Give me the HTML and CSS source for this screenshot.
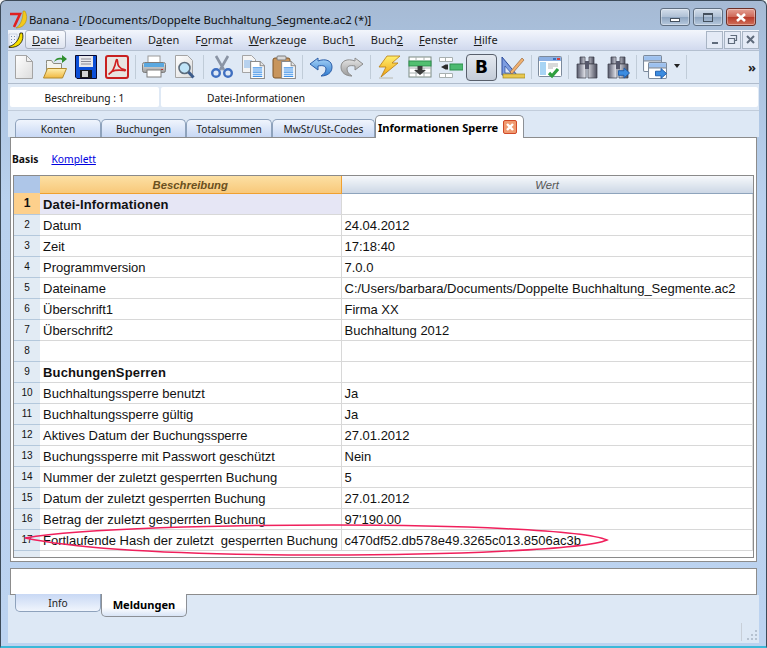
FILE: index.html
```html
<!DOCTYPE html>
<html lang="en">
<head>
    <meta charset="UTF-8">
    <meta name="viewport" content="width=device-width, initial-scale=1.0">
    <title>Banana - Doppelte Buchhaltung</title>
    <link rel="stylesheet" href="styles.css">
</head>
<body>
    <svg class="svg-defs" aria-hidden="true">
        <defs>
            <linearGradient id="gPage" x1="0" y1="0" x2="1" y2="1"><stop offset="0" stop-color="#ffffff"/><stop offset="1" stop-color="#dcdcdc"/></linearGradient>
            <linearGradient id="gFolder" x1="0" y1="0" x2="0" y2="1"><stop offset="0" stop-color="#fff0b0"/><stop offset="1" stop-color="#f0b840"/></linearGradient>
            <linearGradient id="gBlue" x1="0" y1="0" x2="0" y2="1"><stop offset="0" stop-color="#a8d4f8"/><stop offset="1" stop-color="#2f7cd0"/></linearGradient>
            <linearGradient id="gGrey" x1="0" y1="0" x2="0" y2="1"><stop offset="0" stop-color="#e8e8e8"/><stop offset="1" stop-color="#9a9a9a"/></linearGradient>
            <linearGradient id="gBino" x1="0" y1="0" x2="1" y2="0"><stop offset="0" stop-color="#55586a"/><stop offset="0.45" stop-color="#f0f2f8"/><stop offset="1" stop-color="#4a4c5c"/></linearGradient>
            <linearGradient id="gBolt" x1="0" y1="0" x2="0" y2="1"><stop offset="0" stop-color="#fff070"/><stop offset="1" stop-color="#f0a010"/></linearGradient>
            <symbol id="docLines" viewBox="0 0 14 17">
                <path d="M.5.5h9l4 4v12H.5z" fill="#fff" stroke="#8a8a8a"/>
                <path d="M9.500.5v4h4" fill="#e4e4e4" stroke="#8a8a8a"/>
                <path d="M2.500 6.500h9M2.500 8.500h9M2.500 10.500h9M2.500 12.500h9M2.500 14.500h9" stroke="#3c90e8"/>
            </symbol>
            <symbol id="binoculars" viewBox="0 0 24 24">
                <path d="M5 2h5v7H5zM14 2h5v7h-5z" fill="url(#gBino)" stroke="#3a3c48" stroke-width=".7"/>
                <path d="M2 9h9v14H2zM13 9h9v14h-9z" fill="url(#gBino)" stroke="#3a3c48" stroke-width=".7"/>
                <path d="M10 6h4v8h-4z" fill="#55586a"/>
            </symbol>
            <symbol id="blueArrow" viewBox="0 0 13 12">
                <path d="M.5 3.500h6V.5l6 5.500-6 5.500v-3h-6z" fill="#3c8ce0" stroke="#1c5aa8"/>
            </symbol>
            <symbol id="sheet" viewBox="0 0 18 16">
                <rect x=".5" y=".5" width="17" height="15" rx="1" fill="#fff" stroke="#7c8a9c"/>
                <rect x="1" y="1" width="16" height="4" fill="#9cc0ee"/>
                <path d="M.5 5.500h17" stroke="#7c8a9c"/>
            </symbol>
        </defs>
    </svg>

    <div class="window">
        <header class="title-bar">
            <svg class="app-logo" viewBox="0 0 20 20">
                <path d="M8 18C13 15 15 8 15 1h2c4 7 1 17-9 17z" fill="#f2c81c" stroke="#a88410" stroke-width=".5"/>
                <path d="M2 4h10L6 17" fill="none" stroke="#e02020" stroke-width="2.600"/>
            </svg>
            <span class="app-title">Banana - [/Documents/Doppelte Buchhaltung_Segmente.ac2 (*)]</span>
            <div class="win-buttons">
                <button class="win-btn"><span class="glyph-min"></span></button>
                <button class="win-btn"><span class="glyph-max"></span></button>
                <button class="win-btn win-close">
                    <svg viewBox="0 0 12 9" class="close-glyph"><path d="M2 1l8 7M10 1L2 8" stroke="#fff" stroke-width="2.600"/></svg>
                </button>
            </div>
        </header>

        <nav class="menu-bar">
            <svg class="menu-logo" viewBox="0 0 16 16">
                <path d="M1 2h8v12H1z" fill="#eef2fa" stroke="#aab4cc" stroke-width=".5"/>
                <path d="M3 4h1v1H3zM6 4h1v1H6zM3 7h1v1H3zM6 7h1v1H6zM3 10h1v1H3z" fill="#7c8cb0"/>
                <path d="M1 14.500C7 13 11 8 12 1h2.500c2 8-3 15-13.500 14.500z" fill="#f8e000" stroke="#111" stroke-width=".8"/>
            </svg>
            <a class="menu-item menu-current"><u>D</u>atei</a>
            <a class="menu-item"><u>B</u>earbeiten</a>
            <a class="menu-item">D<u>a</u>ten</a>
            <a class="menu-item">F<u>o</u>rmat</a>
            <a class="menu-item"><u>W</u>erkzeuge</a>
            <a class="menu-item">Buch<u>1</u></a>
            <a class="menu-item">Buch<u>2</u></a>
            <a class="menu-item"><u>F</u>enster</a>
            <a class="menu-item"><u>H</u>ilfe</a>
            <div class="doc-buttons">
                <span class="doc-btn"><i class="doc-min"></i></span>
                <span class="doc-btn">
                    <svg viewBox="0 0 11 11" class="doc-glyph"><path d="M3.500 1.500h6v5h-2M1.500 4.500h6v5h-6z" fill="none" stroke="#5f6b7c" stroke-width="1.200"/></svg>
                </span>
                <span class="doc-btn">
                    <svg viewBox="0 0 11 11" class="doc-glyph"><path d="M2 2l7 7M9 2l-7 7" stroke="#5f6b7c" stroke-width="2"/></svg>
                </span>
            </div>
        </nav>

        <div class="toolbar">
            <span class="tool"><svg viewBox="0 0 24 24"><path d="M3.500 .5h11l6 6v17h-17z" fill="url(#gPage)" stroke="#a4a4a4"/><path d="M14.500 .5v6h6z" fill="#f0f0f0" stroke="#a4a4a4"/></svg></span>
            <span class="tool"><svg viewBox="0 0 24 24">
                <path d="M3.500 8.500v14h15V8.500h-8l-2-3h-5z" fill="#f4f4ee" stroke="#8c8c80"/>
                <path d="M4.500 13.500h19l-4 9.500H.5z" fill="url(#gFolder)" stroke="#b08a30"/>
                <path d="M11 7c1-4 5-5 8-4V0l5 4-5 4V5c-3-1-6 0-8 2z" fill="#2f8f2f"/>
            </svg></span>
            <span class="tool"><svg viewBox="0 0 24 24">
                <path d="M1.500 .5h21v23H3l-1.500-1.500z" fill="#0b4fd8" stroke="#0a0a2c"/>
                <rect x="5" y="1" width="14" height="11" fill="#e8e8ec"/>
                <path d="M7 4h10M7 6.500h10M7 9h10" stroke="#8a8a96"/>
                <rect x="6" y="15" width="12" height="8" fill="#1a1a1a"/>
                <rect x="8" y="16" width="6" height="6" fill="#d4d4d4"/>
            </svg></span>
            <span class="tool"><svg viewBox="0 0 24 24">
                <rect x="1" y="1" width="22" height="22" rx="2" fill="#e8e4e0" stroke="#c82020" stroke-width="2"/>
                <path d="M4 19c3-1 6-7 7-13 .3-2 1.500-2 1.500 0 0 5 3 8 7 8.500 1.500.2 1 1.500-.5 1-4-.5-9-.5-12 1-2 1-3 3-3 2.500z" fill="none" stroke="#d02020" stroke-width="1.600"/>
            </svg></span>
            <i class="tool-sep"></i>
            <span class="tool"><svg viewBox="0 0 24 24">
                <rect x="6" y="1" width="12" height="8" fill="#fff" stroke="#9a9a9a"/>
                <rect x=".5" y="7.500" width="23" height="10" rx="2" fill="url(#gGrey)" stroke="#7c7c7c"/>
                <rect x="2" y="8" width="20" height="4" fill="#5aa8e0"/>
                <rect x="19" y="14" width="2" height="1" fill="#d02020"/>
                <rect x="5" y="15" width="14" height="7" fill="#fff" stroke="#7c7c7c"/>
            </svg></span>
            <span class="tool"><svg viewBox="0 0 24 24">
                <path d="M2.500 .5h12l5 5v17h-17z" fill="url(#gPage)" stroke="#a4a4a4"/>
                <circle cx="11.500" cy="13" r="5.500" fill="#bfe4f8" stroke="#5c6c7c" stroke-width="1.600"/>
                <path d="M15.500 17l5 5.500" stroke="#3c5c8c" stroke-width="3"/>
            </svg></span>
            <i class="tool-sep"></i>
            <span class="tool"><svg viewBox="0 0 24 24">
                <path d="M6 1l8 14M18 1l-8 14" stroke="#8a94a4" stroke-width="2.600"/>
                <circle cx="6" cy="18" r="3.800" fill="none" stroke="#3f6fc0" stroke-width="2.400"/>
                <circle cx="18" cy="18" r="3.800" fill="none" stroke="#3f6fc0" stroke-width="2.400"/>
            </svg></span>
            <span class="tool"><svg viewBox="0 0 24 24">
                <path d="M1.500 .5h9l4 4v13h-13z" fill="#f4f4f4" stroke="#a4a4a4"/>
                <path d="M3 6h8M3 8h8M3 10h8M3 12h8" stroke="#7cb0e8"/>
                <use href="#docLines" x="9" y="6" width="15" height="18"/>
            </svg></span>
            <span class="tool"><svg viewBox="0 0 24 24">
                <rect x="1" y="3" width="17" height="20" rx="2" fill="#c8955c" stroke="#7c5428"/>
                <rect x="5" y="1" width="9" height="4" rx="1" fill="#d8d8d8" stroke="#7c7c7c"/>
                <use href="#docLines" x="9" y="6" width="15" height="18"/>
            </svg></span>
            <i class="tool-sep"></i>
            <span class="tool"><svg viewBox="0 0 24 24">
                <path d="M9 3L1 9l8 6v-4c5-1 8 0 8 3 0 3-2 5-5 7 6 0 11-3 11-9 0-6-6-9-14-6z" fill="url(#gBlue)" stroke="#2c5ea8"/>
            </svg></span>
            <span class="tool"><svg viewBox="0 0 24 24">
                <path d="M15 3l8 6-8 6v-4c-5-1-8 0-8 3 0 3 2 5 5 7-6 0-11-3-11-9 0-6 6-9 14-6z" fill="url(#gGrey)" stroke="#8c8c8c"/>
            </svg></span>
            <i class="tool-sep"></i>
            <span class="tool"><svg viewBox="0 0 24 24">
                <path d="M10 1h13l-8 7h6L4 22l5-10H2z" fill="url(#gBolt)" stroke="#b87c10" stroke-width=".8"/>
                <path d="M2 23h14" stroke="#b8b8b0"/>
            </svg></span>
            <span class="tool"><svg viewBox="0 0 24 24">
                <rect x="1" y="2" width="22" height="20" fill="#fff" stroke="#7c8c84"/>
                <path d="M1 13h22M1 18h22M8 13v9M16 13v9M8 2v3M16 2v3" stroke="#a8b0b0"/>
                <rect x="1" y="6" width="22" height="5" fill="#52c070" stroke="#2f8f4f"/>
                <path d="M9.500 11h5v4H18l-6 5-6-5h3.500z" fill="#3c3c3c"/>
            </svg></span>
            <span class="tool"><svg viewBox="0 0 24 24">
                <path d="M.5 2.500h13v4H.5zM.5 18.500h13v4H.5zM6.500 2.500v4M6.500 18.500v4" fill="#fff" stroke="#a8b0b0"/>
                <rect x="11" y="9" width="13" height="6" fill="#4cba70" stroke="#2f8f4f"/>
                <path d="M9 9.500v5H6.500L2 12l4.500-2.500z" fill="#2c2c2c"/>
            </svg></span>
            <span class="tool tool-on"><b class="bold-glyph">B</b></span>
            <span class="tool"><svg viewBox="0 0 24 24">
                <path d="M1 2l15 18H1z" fill="#7c9ce0" stroke="#2c4c9c"/>
                <path d="M4 11l6 7H4z" fill="#dbe6f8" stroke="#2c4c9c" stroke-width=".7"/>
                <rect x="2" y="19" width="22" height="4" fill="#e8c850" stroke="#a08820" stroke-width=".7"/>
                <path d="M9 17L21 3l2 2L11 19z" fill="#f0b070" stroke="#8c5c30" stroke-width=".6"/>
            </svg></span>
            <i class="tool-sep"></i>
            <span class="tool"><svg viewBox="0 0 24 24">
                <rect x=".5" y="1.500" width="23" height="20" rx="1" fill="#fff" stroke="#7c8a9c"/>
                <rect x="1" y="2" width="22" height="4" fill="#8cb0e4"/>
                <rect x="15" y="3" width="3" height="2" fill="#3c70c0"/>
                <rect x="19" y="3" width="3" height="2" fill="#d04040"/>
                <rect x="2" y="7" width="6" height="13" fill="#a8d4f4"/>
                <path d="M10 9h10M10 11h10M10 13h5" stroke="#b4b4b4"/>
                <path d="M11 18l3 3 6-7" fill="none" stroke="#2f9f3f" stroke-width="3.200"/>
            </svg></span>
            <i class="tool-sep"></i>
            <span class="tool"><svg viewBox="0 0 24 24"><use href="#binoculars" width="24" height="24"/></svg></span>
            <span class="tool"><svg viewBox="0 0 24 24">
                <use href="#binoculars" width="24" height="24"/>
                <use href="#blueArrow" x="12" y="12" width="12" height="12"/>
            </svg></span>
            <i class="tool-sep"></i>
            <span class="tool"><svg viewBox="0 0 24 24">
                <use href="#sheet" x="0" y="0" width="19" height="17"/>
                <use href="#sheet" x="5" y="7" width="19" height="17"/>
                <use href="#blueArrow" x="12" y="13" width="12" height="11"/>
            </svg></span>
            <span class="tool-drop"></span>
            <i class="tool-sep"></i>
            <span class="tool-more">&raquo;</span>
        </div>

        <div class="formula-bar">
            <div class="cell-name">Beschreibung : 1</div>
            <div class="cell-value">Datei-Informationen</div>
        </div>

        <div class="tabs tabs-top">
            <a class="tab">Konten</a>
            <a class="tab">Buchungen</a>
            <a class="tab">Totalsummen</a>
            <a class="tab">MwSt/USt-Codes</a>
            <a class="tab tab-active"><span>Informationen Sperre</span><span class="tab-close"><svg viewBox="0 0 10 10" class="tab-close-glyph"><path d="M2 2l6 6M8 2l-6 6" stroke="#fff" stroke-width="2.400"/></svg></span></a>
        </div>

        <section class="panel">
            <div class="view-links">
                <b>Basis</b>
                <a href="#">Komplett</a>
            </div>
            <div class="sheet">
                <table class="grid">
                    <colgroup>
                        <col class="col-num">
                        <col class="col-desc">
                        <col>
                    </colgroup>
                    <thead>
                        <tr>
                            <th class="corner"></th>
                            <th class="head-active">Beschreibung</th>
                            <th class="head-plain">Wert</th>
                        </tr>
                    </thead>
                    <tbody>
                        <tr class="row-current"><th>1</th><td class="strong">Datei-Informationen</td><td></td></tr>
                        <tr><th>2</th><td>Datum</td><td>24.04.2012</td></tr>
                        <tr><th>3</th><td>Zeit</td><td>17:18:40</td></tr>
                        <tr><th>4</th><td>Programmversion</td><td>7.0.0</td></tr>
                        <tr><th>5</th><td>Dateiname</td><td>C:/Users/barbara/Documents/Doppelte Buchhaltung_Segmente.ac2</td></tr>
                        <tr><th>6</th><td>Überschrift1</td><td>Firma XX</td></tr>
                        <tr><th>7</th><td>Überschrift2</td><td>Buchhaltung 2012</td></tr>
                        <tr><th>8</th><td></td><td></td></tr>
                        <tr><th>9</th><td class="strong">BuchungenSperren</td><td></td></tr>
                        <tr><th>10</th><td>Buchhaltungssperre benutzt</td><td>Ja</td></tr>
                        <tr><th>11</th><td>Buchhaltungssperre gültig</td><td>Ja</td></tr>
                        <tr><th>12</th><td>Aktives Datum der Buchungssperre</td><td>27.01.2012</td></tr>
                        <tr><th>13</th><td>Buchungssperre mit Passwort geschützt</td><td>Nein</td></tr>
                        <tr><th>14</th><td>Nummer der zuletzt gesperrten Buchung</td><td>5</td></tr>
                        <tr><th>15</th><td>Datum der zuletzt gesperrten Buchung</td><td>27.01.2012</td></tr>
                        <tr><th>16</th><td>Betrag der zuletzt gesperrten Buchung</td><td>97'190.00</td></tr>
                        <tr><th>17</th><td class="keep-space">Fortlaufende Hash der zuletzt  gesperrten Buchung</td><td>c470df52.db578e49.3265c013.8506ac3b</td></tr>
                    </tbody>
                </table>
            </div>
        </section>

        <div class="message-box"></div>
        <div class="tabs tabs-bottom">
            <a class="tab">Info</a>
            <a class="tab tab-active">Meldungen</a>
        </div>
        <footer class="status-bar">
            <i class="status-sep"></i>
            <svg class="grip" viewBox="0 0 12 12"><path d="M9 1h2v2H9zM5 5h2v2H5zM9 5h2v2H9zM1 9h2v2H1zM5 9h2v2H5zM9 9h2v2H9z" fill="#b6c2d0"/></svg>
        </footer>

        <svg class="highlight" viewBox="0 0 590 36">
            <path d="M1 16C60 6 200 3 310 3c120 0 250 5 273 15C560 28 420 33 300 33 170 33 60 28 1 16z" fill="none" stroke="#f0205c" stroke-width="1.500"/>
        </svg>
    </div>
</body>
</html>
```

FILE: styles.css
```css
* {
    box-sizing: border-box;
}
html, body {
    margin: 0;
    padding: 0;
    background: #f4f4f4;
}
.svg-defs {
    display: block;
    width: 0;
    height: 0;
}
.window {
    position: relative;
    width: 767px;
    height: 648px;
    padding: 0 8px;
    overflow: hidden;
    border: 1px solid #3c4a58;
    border-bottom: 2px solid #3cb8d8;
    border-radius: 6px 6px 0 0;
    background: linear-gradient(to bottom, #a6bad4 0, #a9c0dc 40px, #b9d1ee 200px, #bcd3f0 100%);
    font-family: "Noto Sans", sans-serif;
    font-size: 11px;
    color: #111;
}

/* title bar */
.title-bar {
    display: flex;
    align-items: center;
    height: 29px;
    margin-left: -1px;
    padding-top: 8px;
}
.app-logo {
    width: 20px;
    height: 20px;
    flex: none;
}
.app-title {
    margin-left: 1px;
    font-size: 11.300px;
    white-space: nowrap;
}
.win-buttons {
    display: flex;
    gap: 3px;
    margin-left: auto;
    margin-right: 2px;
    margin-top: -5px;
}
.win-btn {
    display: flex;
    justify-content: center;
    align-items: center;
    width: 30px;
    height: 18px;
    padding: 0;
    border: 1px solid #5f6e80;
    border-radius: 3px;
    background: linear-gradient(to bottom, #d3deeb 0, #b0c1d6 48%, #8ea5c0 52%, #b7c9de 100%);
    box-shadow: inset 0 0 0 1px rgba(255, 255, 255, 0.35);
}
.glyph-min {
    width: 10px;
    height: 4px;
    margin-top: 5px;
    border: 1px solid #44505e;
    background: #fff;
}
.glyph-max {
    width: 10px;
    height: 9px;
    border: 1px solid #44505e;
    border-top-width: 2px;
    background: transparent;
}
.win-close {
    border-color: #6c3028;
    background: linear-gradient(to bottom, #e4a094 0, #cf6a5a 48%, #b83a2a 52%, #d0705c 100%);
}
.close-glyph {
    width: 12px;
    height: 9px;
}

/* menu */
.menu-bar {
    display: flex;
    align-items: center;
    height: 21px;
    margin: 0 -1px;
    padding-bottom: 1px;
    background: linear-gradient(to bottom, #f3f6fc 0, #e2e8f6 50%, #d1d9ee 100%);
    border-bottom: 1px solid #b4c0d0;
    font-size: 11px;
    white-space: nowrap;
}
.menu-logo {
    width: 16px;
    height: 16px;
    flex: none;
    margin-right: 1px;
}
.menu-item {
    padding: 1px 7px;
    border: 1px solid transparent;
    color: #1c1c1c;
}
.menu-current {
    margin-right: 1px;
    padding-left: 6px;
    padding-right: 6px;
    border-color: #a8b0c0;
    border-radius: 3px;
    background: linear-gradient(to bottom, #f8fafe, #dfe4f0);
}
.doc-buttons {
    display: flex;
    gap: 1px;
    margin-left: auto;
}
.doc-btn {
    display: flex;
    justify-content: center;
    align-items: center;
    width: 17px;
    height: 18px;
    border: 1px solid #a8b4c4;
    background: #e4eaf6;
}
.doc-min {
    width: 6px;
    height: 2px;
    margin-top: 7px;
    background: #5f6b7c;
}
.doc-glyph {
    width: 11px;
    height: 11px;
}

/* toolbar */
.toolbar {
    display: flex;
    align-items: center;
    height: 33px;
    margin: 0 -1px;
    background: #dfe9f5;
    border-bottom: 1px solid #b0bccc;
}
.tool {
    display: flex;
    flex: none;
    justify-content: center;
    align-items: center;
    width: 31px;
    height: 27px;
}
.tool svg {
    width: 24px;
    height: 24px;
}
.tool-on {
    border: 1px solid #59606c;
    border-radius: 4px;
    background: linear-gradient(to bottom, #e4e9f0, #c4ccd8);
}
.bold-glyph {
    font-family: "DejaVu Sans", sans-serif;
    font-size: 17px;
    font-weight: 700;
    color: #000;
}
.tool-sep {
    flex: none;
    width: 1px;
    height: 24px;
    margin: 0 2px 0 3px;
    background: #c0ccd8;
}
.tool-drop {
    flex: none;
    width: 0;
    height: 0;
    margin: 0 3px 2px 4px;
    border-left: 3px solid transparent;
    border-right: 3px solid transparent;
    border-top: 4px solid #222;
}
.tool-more {
    margin-left: auto;
    margin-right: 3px;
    font-size: 13px;
    font-weight: 700;
    color: #222;
}

/* name and value of the current cell */
.formula-bar {
    display: flex;
    gap: 2px;
    height: 27px;
    margin: 0 -1px;
    padding: 3px 1px 3px 2px;
    background: #dfe9f5;
    border-bottom: 1px solid #c2cddb;
}
.cell-name,
.cell-value {
    display: flex;
    align-items: center;
    padding-top: 2px;
    background: #fff;
    border-radius: 2px;
    font-size: 10.200px;
}
.cell-name {
    justify-content: center;
    width: 149px;
}
.cell-value {
    flex: 1;
    padding-left: 46px;
}

/* tabs */
.tabs {
    display: grid;
    margin: 0 -1px;
    background: #dde8f5;
}
.tabs-top {
    grid-template-columns: 86px 85px 86px 103px 149px;
    align-items: end;
    height: 26px;
    padding-left: 7px;
}
.tab {
    display: flex;
    justify-content: center;
    align-items: center;
    height: 18px;
    border: 1px solid #8ea2bc;
    border-bottom: 0;
    border-radius: 5px 5px 0 0;
    background: linear-gradient(to bottom, #f0f5fd 0, #c8d8f4 100%);
    font-size: 10.200px;
    color: #222;
}
.tab-active {
    position: relative;
    z-index: 1;
    justify-content: flex-start;
    height: 23px;
    margin-bottom: -1px;
    padding: 0 0 0 2px;
    border-color: #8c9096;
    background: #fff;
    font-size: 11.100px;
    font-weight: 700;
    color: #000;
    white-space: nowrap;
}
.tab-close {
    display: inline-flex;
    justify-content: center;
    align-items: center;
    width: 14px;
    height: 14px;
    margin-left: 5px;
    border: 1px solid #d04a28;
    border-radius: 2px;
    background: #f09a70;
}
.tab-close-glyph {
    width: 10px;
    height: 10px;
}
.panel {
    height: 425px;
    margin: 0 1px;
    padding: 0 2px;
    border: 1px solid #8c8c8c;
    background: #fff;
}
.view-links {
    display: flex;
    gap: 13px;
    height: 37px;
    margin-left: -1px;
    padding-top: 14px;
    font-size: 10.300px;
}
.view-links a {
    color: #0000e0;
}
.sheet {
    height: 383px;
    border: 1px solid #8a8a8a;
    background: linear-gradient(to right, #e2ebf4 26px, #fff 26px);
}
.grid {
    width: 100%;
    border-collapse: collapse;
    table-layout: fixed;
    font-family: "Liberation Sans", Arial, sans-serif;
    font-size: 13px;
}
.col-num {
    width: 26px;
}
.col-desc {
    width: 301px;
}
.grid thead th {
    height: 17px;
    padding: 1px 0 0;
    font-size: 11.300px;
    font-style: italic;
    font-weight: 400;
}
.grid .corner {
    background: #aec6e8;
}
.grid .head-active {
    border-bottom: 1px solid #f0a030;
    border-right: 1px solid #f0a030;
    background: linear-gradient(to bottom, #fce0a4, #f8c87a);
    color: #6a5020;
    font-weight: 700;
}
.grid .head-plain {
    border-bottom: 1px solid #8ea4bc;
    background: linear-gradient(to bottom, #f6f8fb, #ccd7e5);
    color: #555;
}
.grid tbody tr {
    height: 21px;
}
.grid tbody th {
    padding: 0;
    border-bottom: 1px solid #b4c8dc;
    background: #e2ebf4;
    font-size: 10px;
    font-weight: 400;
}
.grid td {
    padding: 2px 3px 0;
    border-right: 1px solid #d8d8d8;
    border-bottom: 1px solid #d8d8d8;
    background: #fff;
    line-height: 16px;
    white-space: nowrap;
    overflow: hidden;
}
.grid .row-current th {
    background: #fdd08c;
    font-size: 12px;
    font-weight: 700;
}
.grid .strong {
    font-weight: 700;
    letter-spacing: .15px;
}
.grid .row-current .strong {
    background: #e6e6f5;
}
.grid .keep-space {
    white-space: pre;
}

/* bottom part */
.message-box {
    height: 27px;
    margin: 6px 1px 0;
    border: 1px solid #8c8c8c;
    background: #fff;
}
.tabs-bottom {
    grid-template-columns: 86px 86px;
    align-items: start;
    height: 0;
    padding-left: 7px;
}
.tabs-bottom .tab {
    height: 18px;
    margin-top: -1px;
    border: 1px solid #8ea2bc;
    border-top: 0;
    border-radius: 0 0 5px 5px;
    background: linear-gradient(to bottom, #c8d8f4, #f0f5fd);
}
.tabs-bottom .tab-active {
    justify-content: center;
    height: 23px;
    padding: 0 0 2px;
    border-color: #8c9096;
    background: linear-gradient(to bottom, #fff 60%, #d8e4f6);
}
.status-bar {
    display: flex;
    justify-content: flex-end;
    align-items: flex-end;
    height: 48px;
    margin: 0 -1px;
    padding: 0 1px 2px 0;
    background: #dde8f5;
}
.status-sep {
    width: 1px;
    height: 18px;
    margin-right: 4px;
    background: #c8cfd8;
}
.grip {
    width: 12px;
    height: 12px;
}

/* hand drawn ellipse round the last row */
.highlight {
    position: absolute;
    left: 23px;
    top: 521px;
    width: 590px;
    height: 36px;
    pointer-events: none;
}
```
